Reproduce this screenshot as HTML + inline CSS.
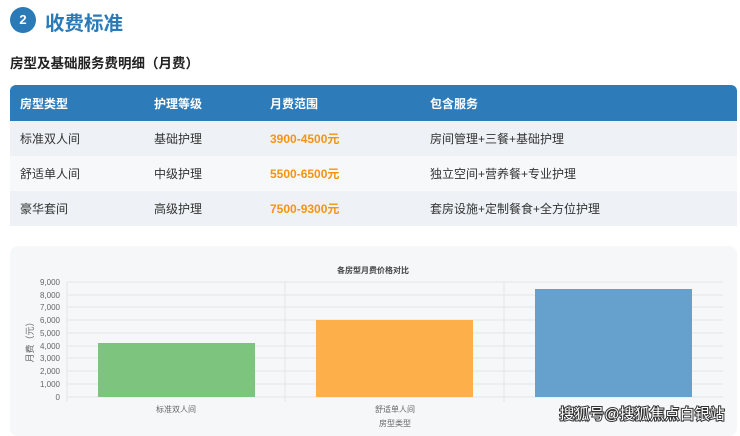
<!DOCTYPE html>
<html><head><meta charset="utf-8"><style>
body{margin:0;width:740px;height:428px;background:#fff;font-family:"Liberation Sans","Noto Sans CJK SC",sans-serif;position:relative;overflow:hidden}
.a{position:absolute}
.circ{left:10px;top:7px;width:26px;height:26px;border-radius:50%;background:#2a7ab8;color:#fff;font-weight:bold;font-size:13px;text-align:center;line-height:26px}
.title{left:45px;top:7px;font-size:19.5px;font-weight:bold;color:#2a7ab8}
.sub{left:10px;top:52px;font-size:13.5px;font-weight:bold;color:#222}
table{position:absolute;left:10px;top:85px;width:727px;border-collapse:collapse;font-size:12px;color:#333}
th{background:#2d7bb9;color:#fff;text-align:left;height:36px;font-weight:bold;padding:0}
td{height:35px;padding:0}
tr:nth-child(odd) td{background:#f7f8fa}
tr:nth-child(even) td{background:#eef2f6}
.o{color:#f7930e;font-weight:bold}
.panel{left:10px;top:246px;width:727px;height:190px;background:#f6f7f9;border-radius:8px}
</style></head><body>
<div class="a circ">2</div>
<div class="a title">收费标准</div>
<div class="a sub">房型及基础服务费明细（月费）</div>
<table>
<tr><th style="width:134px;padding-left:10px;border-radius:6px 0 0 0">房型类型</th><th style="width:116px">护理等级</th><th style="width:160px">月费范围</th><th style="border-radius:0 6px 0 0">包含服务</th></tr>
<tr><td style="padding-left:10px">标准双人间</td><td>基础护理</td><td class="o">3900-4500元</td><td>房间管理+三餐+基础护理</td></tr>
<tr><td style="padding-left:10px">舒适单人间</td><td>中级护理</td><td class="o">5500-6500元</td><td>独立空间+营养餐+专业护理</td></tr>
<tr><td style="padding-left:10px">豪华套间</td><td>高级护理</td><td class="o">7500-9300元</td><td>套房设施+定制餐食+全方位护理</td></tr>
</table>
<div class="a panel"></div>
<svg class="a" style="left:0;top:0" width="740" height="428" font-family="Liberation Sans,Noto Sans CJK SC,sans-serif">
<text x="373" y="273" font-size="8" font-weight="bold" fill="#444" text-anchor="middle">各房型月费价格对比</text>
<g stroke="#e3e5e8" stroke-width="1">
<line x1="67" y1="282" x2="723" y2="282"/><line x1="67" y1="295" x2="723" y2="295"/><line x1="67" y1="307" x2="723" y2="307"/><line x1="67" y1="320" x2="723" y2="320"/><line x1="67" y1="333" x2="723" y2="333"/><line x1="67" y1="346" x2="723" y2="346"/><line x1="67" y1="358" x2="723" y2="358"/><line x1="67" y1="371" x2="723" y2="371"/><line x1="67" y1="384" x2="723" y2="384"/><line x1="67" y1="397" x2="723" y2="397"/>
<line x1="67" y1="282" x2="67" y2="402"/><line x1="285" y1="282" x2="285" y2="402"/><line x1="504" y1="282" x2="504" y2="402"/>
</g>
<g font-size="8" fill="#666" text-anchor="end">
<text x="60" y="285">9,000</text><text x="60" y="298">8,000</text><text x="60" y="310">7,000</text><text x="60" y="323">6,000</text><text x="60" y="336">5,000</text><text x="60" y="349">4,000</text><text x="60" y="361">3,000</text><text x="60" y="374">2,000</text><text x="60" y="387">1,000</text><text x="60" y="400">0</text>
</g>
<text transform="translate(33,340) rotate(-90)" font-size="9" fill="#666" text-anchor="middle">月费（元）</text>
<rect x="98" y="343" width="157" height="54" fill="#7dc47f"/>
<rect x="316" y="320" width="157" height="77" fill="#fdb04a"/>
<rect x="535" y="289" width="157" height="108" fill="#66a0cc"/>
<g font-size="8" fill="#666" text-anchor="middle">
<text x="176" y="412">标准双人间</text><text x="395" y="412">舒适单人间</text><text x="395" y="426">房型类型</text>
</g>
<text x="642" y="419" font-size="15" fill="#fff" stroke="#333" stroke-width="2" paint-order="stroke" text-anchor="middle">搜狐号@搜狐焦点白银站</text>
</svg>
</body></html>
